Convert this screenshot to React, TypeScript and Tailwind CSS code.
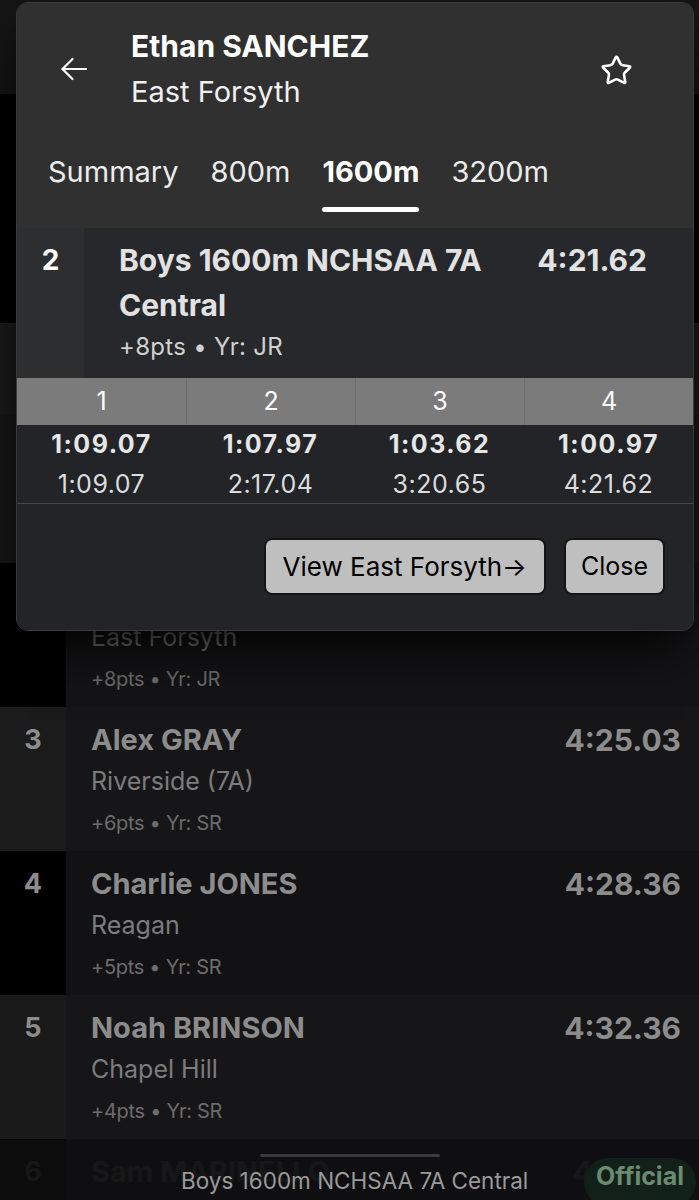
import { Star } from 'lucide-react';

const rows = [
  { n: 2, name: 'Ethan SANCHEZ', school: 'East Forsyth', time: '4:21.62', pts: '+8pts', yr: 'JR', rankBg: 'bg-black', bodyBg: 'bg-[#141416]', dim: false },
  { n: 3, name: 'Alex GRAY', school: 'Riverside (7A)', time: '4:25.03', pts: '+6pts', yr: 'SR', rankBg: 'bg-[#1b1b1c]', bodyBg: 'bg-[#161618]', dim: false },
  { n: 4, name: 'Charlie JONES', school: 'Reagan', time: '4:28.36', pts: '+5pts', yr: 'SR', rankBg: 'bg-black', bodyBg: 'bg-[#121214]', dim: false },
  { n: 5, name: 'Noah BRINSON', school: 'Chapel Hill', time: '4:32.36', pts: '+4pts', yr: 'SR', rankBg: 'bg-[#1a1a1b]', bodyBg: 'bg-[#161618]', dim: false },
  { n: 6, name: 'Sam MARINELLO', school: 'Green Hope', time: '4:35.10', pts: '+3pts', yr: 'SR', rankBg: 'bg-black', bodyBg: 'bg-[#121214]', dim: true },
];

const splits = [
  { lap: 1, split: '1:09.07', total: '1:09.07' },
  { lap: 2, split: '1:07.97', total: '2:17.04' },
  { lap: 3, split: '1:03.62', total: '3:20.65' },
  { lap: 4, split: '1:00.97', total: '4:21.62' },
];

const tabs = ['Summary', '800m', '1600m', '3200m'];

function BackArrow() {
  return (
    <svg width="28" height="24" viewBox="0 0 28 24" fill="none" stroke="currentColor" strokeWidth="2.2" strokeLinecap="round" strokeLinejoin="round" className="text-white">
      <path d="M26 12H2.5" />
      <path d="M12.5 2 2.5 12l10 10" />
    </svg>
  );
}

function ResultRow({ r }: { r: (typeof rows)[number] }) {
  const strong = r.dim ? 'text-[#3a3a3a]' : 'text-[#8c8c8c]';
  return (
    <div className="flex h-[144px]">
      <div className={`w-[66px] shrink-0 pt-[16px] text-center text-[27px] leading-[34px] font-bold ${strong} ${r.rankBg}`}>
        {r.n}
      </div>
      <div className={`flex-1 flex pl-[25px] pr-[18px] pt-[16px] ${r.bodyBg}`}>
        <div className="flex-1">
          <p className={`text-[29px] leading-[34px] font-bold ${strong}`}>{r.name}</p>
          <p className="mt-[7px] text-[25px] leading-[34px] text-[#7c7c7c]">{r.school}</p>
          <p className="mt-[10px] text-[20px] leading-[30px] tracking-[-0.3px] text-[#6c6c6c]">
            {r.pts} • Yr: {r.yr}
          </p>
        </div>
        <p className={`text-[30px] leading-[34px] font-bold ${strong}`}>{r.time}</p>
      </div>
    </div>
  );
}

export default function App() {
  return (
    <div className="relative w-[699px] h-[1200px] overflow-hidden bg-black font-['Inter',sans-serif]">
      {/* page behind the sheet */}
      <div className="flex flex-col">
        <div className="h-[94px] bg-[#151515]" />
        <div className="h-[229px] bg-black" />
        <div className="h-[92px] bg-[#1a1a1a]" />
        <div className="h-[148px] bg-[#171717]" />
        {rows.map((r) => (
          <ResultRow key={r.n} r={r} />
        ))}
      </div>

      {/* bottom now-playing bar */}
      <div className="absolute left-0 right-0 bottom-0 h-[60px] bg-[#0f0f10]/80">
        <div className="mx-auto mt-[14px] h-[3px] w-[180px] rounded-full bg-[#3a3a3a]" />
        <p className="absolute left-[181px] top-[26px] text-[22.5px] leading-[30px] text-[#9a9a9a]">
          Boys 1600m NCHSAA 7A Central
        </p>
        <div className="absolute right-[3px] top-[18px] h-[48px] w-[112px] rounded-full bg-[#13201a] flex items-start justify-center pt-[3px]">
          <span className="text-[25px] leading-[30px] font-bold text-[#6b8b70]">Official</span>
        </div>
      </div>

      {/* athlete sheet */}
      <div className="absolute left-[16px] top-[2px] w-[678px] rounded-[12px] overflow-hidden border border-[#3a3a3c] shadow-2xl shadow-black">
        <div className="bg-[#303030]">
          <div className="flex items-center pl-[43px] pr-[60px] pt-[23px]">
            <BackArrow />
            <div className="flex-1 pl-[43px]">
              <p className="text-[30px] leading-[40px] font-bold text-white">Ethan SANCHEZ</p>
              <p className="mt-[6px] text-[29px] leading-[40px] text-[#f0f0f0]">East Forsyth</p>
            </div>
            <Star size={33} strokeWidth={1.9} className="text-white mb-[-2px]" />
          </div>
          <div className="flex gap-[32px] px-[31px] mt-[40px] pb-[16px]">
            {tabs.map((t) => {
              const active = t === '1600m';
              return (
                <div key={t} className="flex flex-col items-stretch">
                  <span className={`text-[29px] leading-[40px] ${active ? 'font-bold text-white' : 'text-[#ececec]'}`}>{t}</span>
                  <div className={`mt-[15px] h-[5px] rounded-full ${active ? 'bg-white' : 'bg-transparent'}`} />
                </div>
              );
            })}
          </div>
        </div>

        <div className="flex bg-[#26282c]">
          <div className="w-[67px] shrink-0 bg-[#2d2e30] pt-[10px] text-center text-[28px] leading-[45px] font-bold text-white">
            2
          </div>
          <div className="flex-1 flex pl-[35px] pr-[46px] pt-[10px] pb-[16px]">
            <div className="flex-1 pr-[24px]">
              <p className="text-[30px] leading-[45px] font-bold text-[#e2e2e2]">Boys 1600m NCHSAA 7A Central</p>
              <p className="mt-[4px] text-[24px] leading-[30px] tracking-[0.3px] text-[#d0d0d0]">+8pts • Yr: JR</p>
            </div>
            <p className="text-[30px] leading-[45px] font-bold text-[#e2e2e2]">4:21.62</p>
          </div>
        </div>

        <div className="bg-[#222428]">
          <div className="grid grid-cols-4 bg-[#7b7b7b]">
            {splits.map((s, i) => (
              <div
                key={s.lap}
                className={`h-[47px] flex items-center justify-center text-[25px] text-white ${i > 0 ? 'border-l border-[#6e6e6e]' : ''}`}
              >
                {s.lap}
              </div>
            ))}
          </div>
          <div className="grid grid-cols-4 pt-[1px] pb-[1px] border-b border-[#46484c]">
            {splits.map((s) => (
              <div key={s.lap} className="flex flex-col items-center">
                <span className="text-[25px] leading-[36px] font-bold tracking-[1.5px] text-[#e6e6e6]">{s.split}</span>
                <span className="mt-[4px] text-[25px] leading-[36px] tracking-[0.5px] text-[#dcdcdc]">{s.total}</span>
              </div>
            ))}
          </div>
          <div className="flex justify-end gap-[18px] pr-[28px] pt-[34px] pb-[35px]">
            <button className="h-[57px] px-[17px] rounded-[8px] border-2 border-[#141414] bg-[#bfbfbf] text-[26px] text-black">
              View East Forsyth→
            </button>
            <button className="h-[57px] px-[15px] rounded-[8px] border-2 border-[#141414] bg-[#bfbfbf] text-[25px] text-black">
              Close
            </button>
          </div>
        </div>
      </div>
    </div>
  );
}
